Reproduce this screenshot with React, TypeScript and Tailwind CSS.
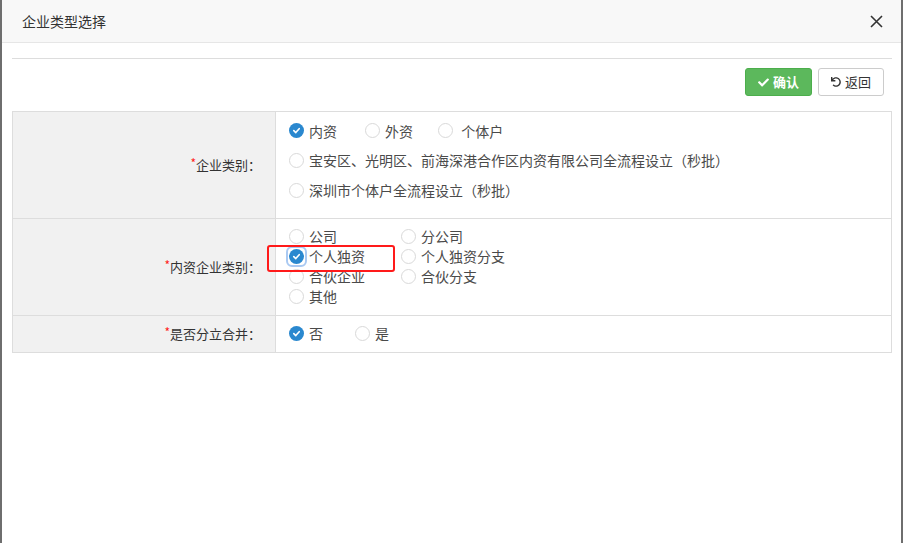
import React from 'react';
import { FaCheck, FaUndo } from 'react-icons/fa';

const font = { fontFamily: '"Microsoft YaHei", "Noto Sans CJK SC", "Noto Sans", sans-serif' };

function Radio({ checked, focus }: { checked?: boolean; focus?: boolean }) {
  const dot = checked ? (
    <span className="w-[15px] h-[15px] rounded-full bg-[#2a88cf] flex items-center justify-center">
      <svg width="9" height="9" viewBox="0 0 10 10">
        <path d="M2 5.2 L4.2 7.3 L8 3" fill="none" stroke="#fff" strokeWidth="1.8" strokeLinecap="round" strokeLinejoin="round" />
      </svg>
    </span>
  ) : (
    <span className="w-[15px] h-[15px] rounded-full bg-white border border-[#d9d9d9]" />
  );
  if (focus) {
    return (
      <span className="w-[15px] h-[15px] mr-[5px] shrink-0 rounded-[3px] outline-2 outline-[#a9c9f2] outline-offset-1 flex">
        {dot}
      </span>
    );
  }
  return <span className="w-[15px] h-[15px] mr-[5px] shrink-0 flex">{dot}</span>;
}

function Option({ label, checked, focus, className = '' }: { label: string; checked?: boolean; focus?: boolean; className?: string }) {
  return (
    <label className={`flex items-center text-[14px] text-[#4a4a4a] leading-[20px] whitespace-pre ${className}`}>
      <Radio checked={checked} focus={focus} />
      {label}
    </label>
  );
}

function Label({ text }: { text: string }) {
  return (
    <div className="w-[263px] shrink-0 bg-[#f1f1f1] border-r border-[#dddddd] flex items-center justify-end pr-[14px] text-[13px] text-[#333]">
      <span className="text-[#ff2020] text-[12px] self-center -mt-[4px]">*</span>
      {text}
    </div>
  );
}

export default function App() {
  return (
    <div className="w-[903px] h-[543px] bg-white border-l-2 border-r-2 border-[#6e6e6e] flex flex-col overflow-hidden" style={font}>
      {/* header */}
      <div className="h-[43px] shrink-0 bg-[#f8f8f8] border-b border-[#e6e6e6] flex items-center justify-between pl-[20px] pr-[18px]">
        <span className="text-[14px] text-[#333]">企业类型选择</span>
        <svg width="13" height="13" viewBox="0 0 13 13">
          <path d="M1 1 L12 12 M12 1 L1 12" stroke="#333" strokeWidth="1.6" />
        </svg>
      </div>

      <div className="pl-[10px] pr-[9px] pt-[15px]">
        <div className="border-t border-[#dddddd]" />

        <div className="mt-[9px] flex justify-end gap-[6px] pr-[8px]">
          <button className="w-[67px] h-[28px] rounded-[3px] bg-[#5cb85c] border border-[#4cae4c] text-white text-[13px] font-bold flex items-center justify-center gap-[4px]">
            <FaCheck size={11} />
            确认
          </button>
          <button className="w-[66px] h-[28px] rounded-[3px] bg-white border border-[#cccccc] text-[#333] text-[13px] flex items-center justify-center gap-[4px]">
            <FaUndo size={10} />
            返回
          </button>
        </div>

        <div className="mt-[15px] border border-[#dddddd]">
          <div className="flex h-[107px] border-b border-[#dddddd]">
            <Label text="企业类别：" />
            <div className="flex-1 pl-[13px] pt-[4px] flex flex-col">
              <div className="h-[29px] flex items-center">
                <Option label="内资" checked className="mr-[28px]" />
                <Option label="外资" className="mr-[25px]" />
                <Option label=" 个体户" />
              </div>
              <div className="h-[30px] flex items-center">
                <Option label="宝安区、光明区、前海深港合作区内资有限公司全流程设立（秒批）" />
              </div>
              <div className="h-[30px] flex items-center">
                <Option label="深圳市个体户全流程设立（秒批）" />
              </div>
            </div>
          </div>

          <div className="flex h-[97px] border-b border-[#dddddd]">
            <Label text="内资企业类别：" />
            <div className="relative flex-1 pl-[13px] pt-[7px]">
              <div className="grid grid-cols-[112px_112px]">
                <Option label="公司" />
                <Option label="分公司" />
                <Option label="个人独资" checked focus />
                <Option label="个人独资分支" />
                <Option label="合伙企业" />
                <Option label="合伙分支" />
                <Option label="其他" />
              </div>
              <div className="absolute left-[-9px] top-[26px] w-[128px] h-[27px] border-[2.5px] border-[#ff1a1a] rounded-[3px]" />
            </div>
          </div>

          <div className="flex h-[36px]">
            <Label text="是否分立合并：" />
            <div className="flex-1 pl-[13px] pb-[2px] flex items-center">
              <Option label="否" checked className="mr-[32px]" />
              <Option label="是" />
            </div>
          </div>
        </div>
      </div>
    </div>
  );
}
